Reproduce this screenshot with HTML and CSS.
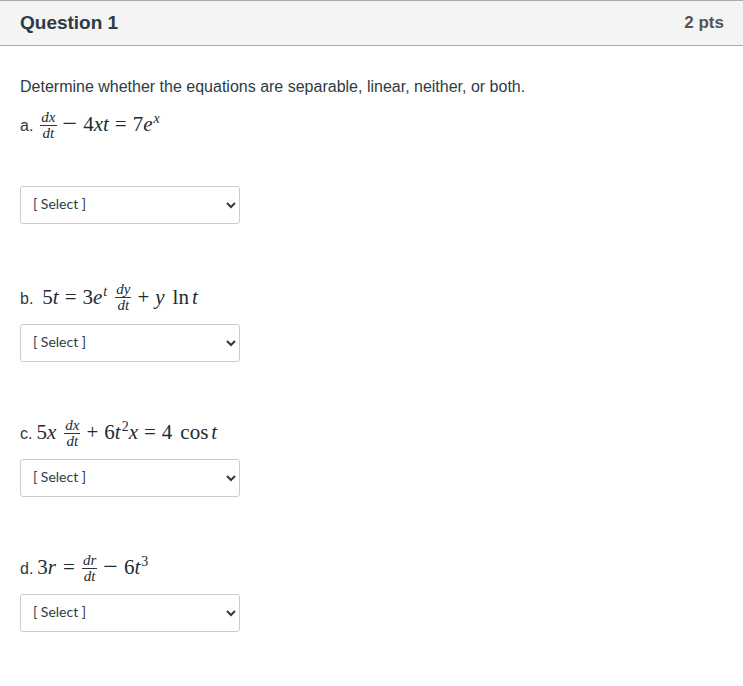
FILE: index.html
```html
<!DOCTYPE html>
<html lang="en">
<head>
<meta charset="utf-8">
<title>Question 1</title>
<link rel="stylesheet" href="styles.css">
</head>
<body>
<section class="question">
  <header class="q-header">
    <h2 class="q-title">Question 1</h2>
    <span class="q-pts">2 pts</span>
  </header>
  <div class="q-body">
    <p class="intro">Determine whether the equations are separable, linear, neither, or both.</p>

    <div class="eq-row eq-a">
      <span class="label">a.</span>
      <span class="math math-a low-frac">
        <span class="frac"><span class="num"><i>dx</i></span><span class="den"><i>dt</i></span></span>
        <span class="op op-wide">−</span><span>4<i>xt</i></span><span class="op">=</span><span>7<i>e</i><sup><i>x</i></sup></span>
      </span>
    </div>
    <select class="answer answer-a"><option>[ Select ]</option></select>

    <div class="eq-row eq-b">
      <span class="label">b.</span>
      <span class="math math-b">
        <span>5<i>t</i></span><span class="op">=</span><span>3<i>e</i><sup><i>t</i></sup></span>
        <span class="frac frac-gap"><span class="num"><i>dy</i></span><span class="den"><i>dt</i></span></span>
        <span class="op">+</span><span><i>y</i></span><span class="fn">ln<i class="thin">t</i></span>
      </span>
    </div>
    <select class="answer"><option>[ Select ]</option></select>

    <div class="eq-row">
      <span class="label">c.</span>
      <span class="math low-frac">
        <span>5<i>x</i></span>
        <span class="frac frac-gap"><span class="num"><i>dx</i></span><span class="den"><i>dt</i></span></span>
        <span class="op">+</span><span>6<i>t</i><sup>2</sup><i>x</i></span><span class="op">=</span><span>4</span><span class="fn">cos<i class="thin">t</i></span>
      </span>
    </div>
    <select class="answer"><option>[ Select ]</option></select>

    <div class="eq-row">
      <span class="label">d.</span>
      <span class="math low-frac">
        <span>3<i>r</i></span><span class="op op-eq">=</span>
        <span class="frac"><span class="num"><i>dr</i></span><span class="den"><i>dt</i></span></span>
        <span class="op op-wide">−</span><span>6<i>t</i><sup>3</sup></span>
      </span>
    </div>
    <select class="answer"><option>[ Select ]</option></select>
  </div>
</section>
</body>
</html>
```
FILE: styles.css
```css
* { box-sizing: border-box; }
html, body { margin: 0; padding: 0; background: #fff; }
body { font-family: "Liberation Sans", Arial, sans-serif; color: #2d3b45; }

.q-header {
  display: flex;
  justify-content: space-between;
  align-items: center;
  height: 46px;
  padding: 0 19px 0 20px;
  background: #f4f4f4;
  border-top: 1px solid #aaa;
  border-bottom: 1px solid #aaa;
}
.q-title { margin: 0 0 2px; font-size: 19px; font-weight: 700; line-height: 1; }
.q-pts { font-size: 17px; font-weight: 700; color: #555; }

.q-body { padding: 0 20px; }
.intro { margin: 0; padding-top: 32px; font-size: 16px; line-height: 18px; }

.eq-row {
  display: flex;
  align-items: center;
  height: 30px;
  margin-top: 55px;
  font-size: 16px;
}
.eq-a { margin-top: 13px; }
.eq-b { margin-top: 58px; }
.label { flex: none; margin-right: 4px; padding-top: 3px; line-height: 18px; }
.math-a { margin-left: 3px; }
.math-b { margin-left: 5px; }

.math {
  display: flex;
  align-items: center;
  font-family: "Liberation Serif", "Times New Roman", serif;
  font-size: 21px;
  color: #222b33;
  white-space: nowrap;
}
.math sup { margin-left: 1px; font-size: 14px; line-height: 0; vertical-align: 8px; }
.op { margin: 0 6px; }
.op-wide { font-size: 26px; line-height: 1; }
.op-eq { margin: 0 7px; }
.frac {
  display: inline-flex;
  flex-direction: column;
  align-items: center;
  font-size: 15px;
  line-height: 15px;
}
.low-frac .frac { margin-top: 3px; }
.frac-gap { margin-left: 8px; }
.num { padding: 0 1px; border-bottom: 1px solid #333; width: 100%; text-align: center; }
.den { text-align: center; }
.fn { margin-left: 8px; }
.thin { margin-left: 3px; }

.answer {
  display: block;
  width: 220px;
  height: 38px;
  margin-top: 12px;
  padding: 0 8px 3px;
  font-family: Lato, sans-serif;
  font-size: 14px;
  color: #2d3b45;
  background: #fff;
  border: 1px solid #c7cdd1;
  border-radius: 3px;
}
.answer-a { margin-top: 47px; }
```
